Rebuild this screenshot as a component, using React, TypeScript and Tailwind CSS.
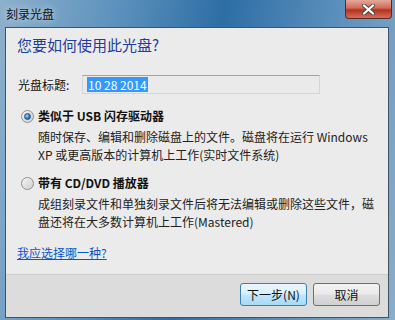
import React from 'react';

const font = { fontFamily: '"Noto Sans CJK SC", "Noto Sans", sans-serif' };

function Radio({ checked }: { checked?: boolean }) {
  return (
    <div className="w-[13px] h-[13px] rounded-full border border-[#8e8f8f] bg-gradient-to-br from-[#f4f4f4] to-[#cfcfcf] flex items-center justify-center shrink-0">
      {checked && (
        <div className="w-[7px] h-[7px] rounded-full bg-[radial-gradient(circle_at_35%_35%,#9fd8ff,#1c66b8_70%)] border border-[#1b4f8c]" />
      )}
    </div>
  );
}

export default function App() {
  return (
    <div
      className="relative w-[395px] h-[320px] overflow-hidden bg-[linear-gradient(100deg,#8eb0cc_0%,#5f93bd_25%,#2d6ea5_50%,#5b8fbb_75%,#8aadc9_100%)]"
      style={font}
    >
      {/* title */}
      <div className="h-[27px] pl-[6px] flex items-center text-[12px] text-[#111] [text-shadow:0_0_6px_#dfe9f2]">
        刻录光盘
      </div>

      {/* close button */}
      <div className="absolute top-0 right-[3px] w-[47px] h-[19px] rounded-b-[4px] border border-t-0 border-[#5a2a22] bg-[linear-gradient(#e6a89c,#cf6a57_45%,#b8301b_55%,#d0705c)] flex items-center justify-center">
        <svg width="13" height="11" viewBox="0 0 13 11">
          <path d="M2 1.5 L11 9.5 M11 1.5 L2 9.5" stroke="#4a4a4a" strokeWidth="4" strokeLinecap="round" />
          <path d="M2 1.5 L11 9.5 M11 1.5 L2 9.5" stroke="#ffffff" strokeWidth="2.2" strokeLinecap="round" />
        </svg>
      </div>

      {/* client area */}
      <div className="ml-[5px] mr-[6px] h-[291px] border border-[#3f5467] bg-[#ebebeb] flex flex-col">
        <div className="flex-1 pl-[11px] pr-[8px]">
          <div className="mt-[8px] text-[15px] leading-[18px] text-[#1f3ca0]">您要如何使用此光盘?</div>

          <div className="mt-[21px] flex items-center text-[12px] text-[#111]">
            <span className="w-[65px] pl-[1px]">光盘标题:</span>
            <div className="w-[238px] h-[19px] border border-[#d5d5d5] border-t-[#a3a3a3] bg-[#eaeaea] flex items-center pl-[4px]">
              <span className="bg-[#3399ff] text-white leading-[15px] px-[1px]">10 28 2014</span>
            </div>
          </div>

          <div className="mt-[13px] flex items-center gap-[4px] pl-[4px]">
            <Radio checked />
            <span className="text-[12px] font-bold text-[#111] leading-[18px]">类似于 USB 闪存驱动器</span>
          </div>
          <div className="pl-[21px] mt-[3px] text-[12px] leading-[18px] text-[#222]">
            <div>随时保存、编辑和删除磁盘上的文件。磁盘将在运行 Windows</div>
            <div>XP 或更高版本的计算机上工作(实时文件系统)</div>
          </div>

          <div className="mt-[10px] flex items-center gap-[4px] pl-[4px]">
            <Radio />
            <span className="text-[12px] font-bold text-[#111] leading-[18px]">带有 CD/DVD 播放器</span>
          </div>
          <div className="pl-[21px] mt-[3px] text-[12px] leading-[18px] text-[#222]">
            <div>成组刻录文件和单独刻录文件后将无法编辑或删除这些文件，磁</div>
            <div>盘还将在大多数计算机上工作(Mastered)</div>
          </div>

          <div className="mt-[13px] text-[12px] leading-[18px] text-[#0a55c8] underline">我应选择哪一种?</div>
        </div>

        <div className="h-[43px] border-t border-[#cdcdcd] bg-[#dcdcdc] flex items-start justify-end gap-[6px] pr-[8px] pt-[8px]">
          <div className="w-[67px] h-[23px] rounded-[3px] border border-[#3c7fb1] bg-[linear-gradient(#eaf6fd,#d9f0fc_45%,#bee6fd_55%,#a7d9f5)] flex items-center justify-center text-[12px] text-[#111]">
            下一步(N)
          </div>
          <div className="w-[67px] h-[23px] rounded-[3px] border border-[#707070] bg-[linear-gradient(#f2f2f2,#ebebeb_45%,#dddddd_55%,#cfcfcf)] flex items-center justify-center text-[12px] text-[#111]">
            取消
          </div>
        </div>
      </div>
    </div>
  );
}
